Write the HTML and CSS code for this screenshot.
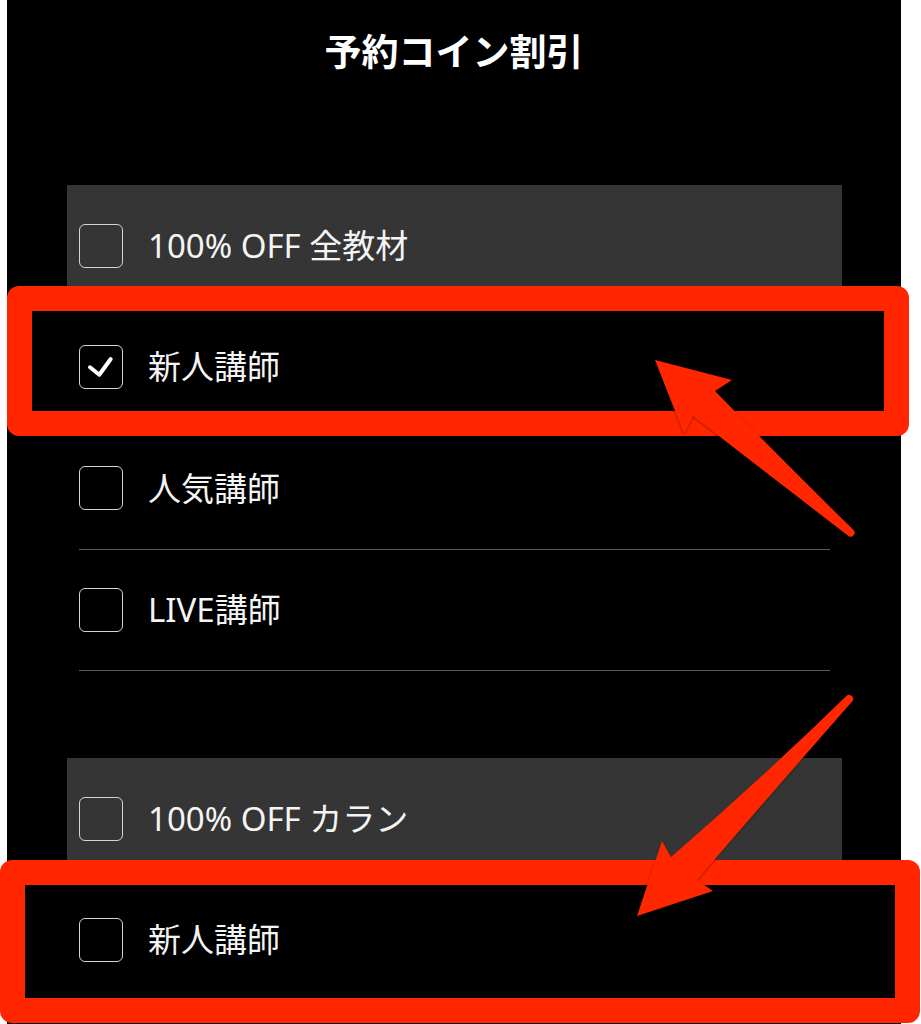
FILE: index.html
```html
<!DOCTYPE html>
<html lang="ja">
<head>
<meta charset="utf-8">
<title>予約コイン割引</title>
<link rel="stylesheet" href="styles.css">
</head>
<body>
<div class="panel">
  <h1 class="title">予約コイン割引</h1>

  <section class="group">
    <div class="row row-head">
      <span class="box"></span>
      <span class="label">100% OFF 全教材</span>
    </div>
    <div class="row row-item">
      <span class="box box-checked">
        <svg viewBox="0 0 44 44" width="44" height="44"><polyline points="11,23.3 20.3,30.7 31.7,15" fill="none" stroke="#fff" stroke-width="4" stroke-linecap="round" stroke-linejoin="round"/></svg>
      </span>
      <span class="label">新人講師</span>
    </div>
    <div class="row row-item">
      <span class="box"></span>
      <span class="label">人気講師</span>
    </div>
    <div class="row row-item">
      <span class="box"></span>
      <span class="label">LIVE講師</span>
    </div>
  </section>

  <section class="group group-second">
    <div class="row row-head">
      <span class="box"></span>
      <span class="label">100% OFF カラン</span>
    </div>
    <div class="row row-item">
      <span class="box"></span>
      <span class="label">新人講師</span>
    </div>
  </section>
</div>

<div class="mark mark-one"></div>
<div class="mark mark-two"></div>
<svg class="arrows" width="921" height="1024" viewBox="0 0 921 1024">
  <path d="M655,360 L732,380 L715,391 Q790,468 853.6,530 A4,4 0 0 1 848.4,536 Q768,474 693,416 L684,434 Z" fill="#ff2600"/>
  <path d="M637,916 L662,841 L671,857 Q760,780 846.1,696.2 A4,4 0 0 1 851.9,701.8 Q770,795 697,880 L713,891 Z" fill="#ff2600"/>
</svg>
</body>
</html>
```

FILE: styles.css
```css
html, body {
  margin: 0;
  padding: 0;
}

body {
  background: #ffffff;
  width: 921px;
  height: 1024px;
  overflow: hidden;
  position: relative;
  font-family: "Noto Sans", "Noto Sans CJK JP", sans-serif;
  color: #f4f4f4;
}

.panel {
  margin-left: 7px;
  width: 894px;
  height: 1024px;
  background: #000000;
  display: flex;
  flex-direction: column;
}

.title {
  margin: 0;
  height: 100px;
  line-height: 100px;
  text-align: center;
  font-family: "Noto Sans CJK JP", sans-serif;
  font-size: 37px;
  font-weight: 700;
  color: #ffffff;
}

.group {
  margin: 85px 59px 0 60px;
  display: flex;
  flex-direction: column;
}

.group-second {
  margin-top: 87px;
}

.row {
  box-sizing: border-box;
  height: 121.5px;
  display: flex;
  align-items: center;
  gap: 25px;
}

.row-head {
  background: #353535;
  padding-left: 12px;
}

.row-item {
  margin: 0 12px;
  border-bottom: 1px solid #5a5a5a;
}

.box {
  box-sizing: border-box;
  width: 44px;
  height: 44px;
  flex: none;
  border: 1.5px solid #d4d4d4;
  border-radius: 6px;
  position: relative;
}

.box svg {
  position: absolute;
  left: -1.5px;
  top: -1.5px;
}

.label {
  font-size: 33px;
  line-height: 1;
  white-space: nowrap;
}

.mark {
  position: absolute;
  box-sizing: border-box;
  border: 25px solid #ff2600;
  border-radius: 12px;
}

.mark-one {
  left: 7px;
  top: 286px;
  width: 902px;
  height: 150px;
}

.mark-two {
  left: 0;
  top: 860px;
  width: 920px;
  height: 163px;
}

.arrows {
  position: absolute;
  left: 0;
  top: 0;
  filter: drop-shadow(0 1px 1px rgba(0, 0, 0, 0.35));
}
```
